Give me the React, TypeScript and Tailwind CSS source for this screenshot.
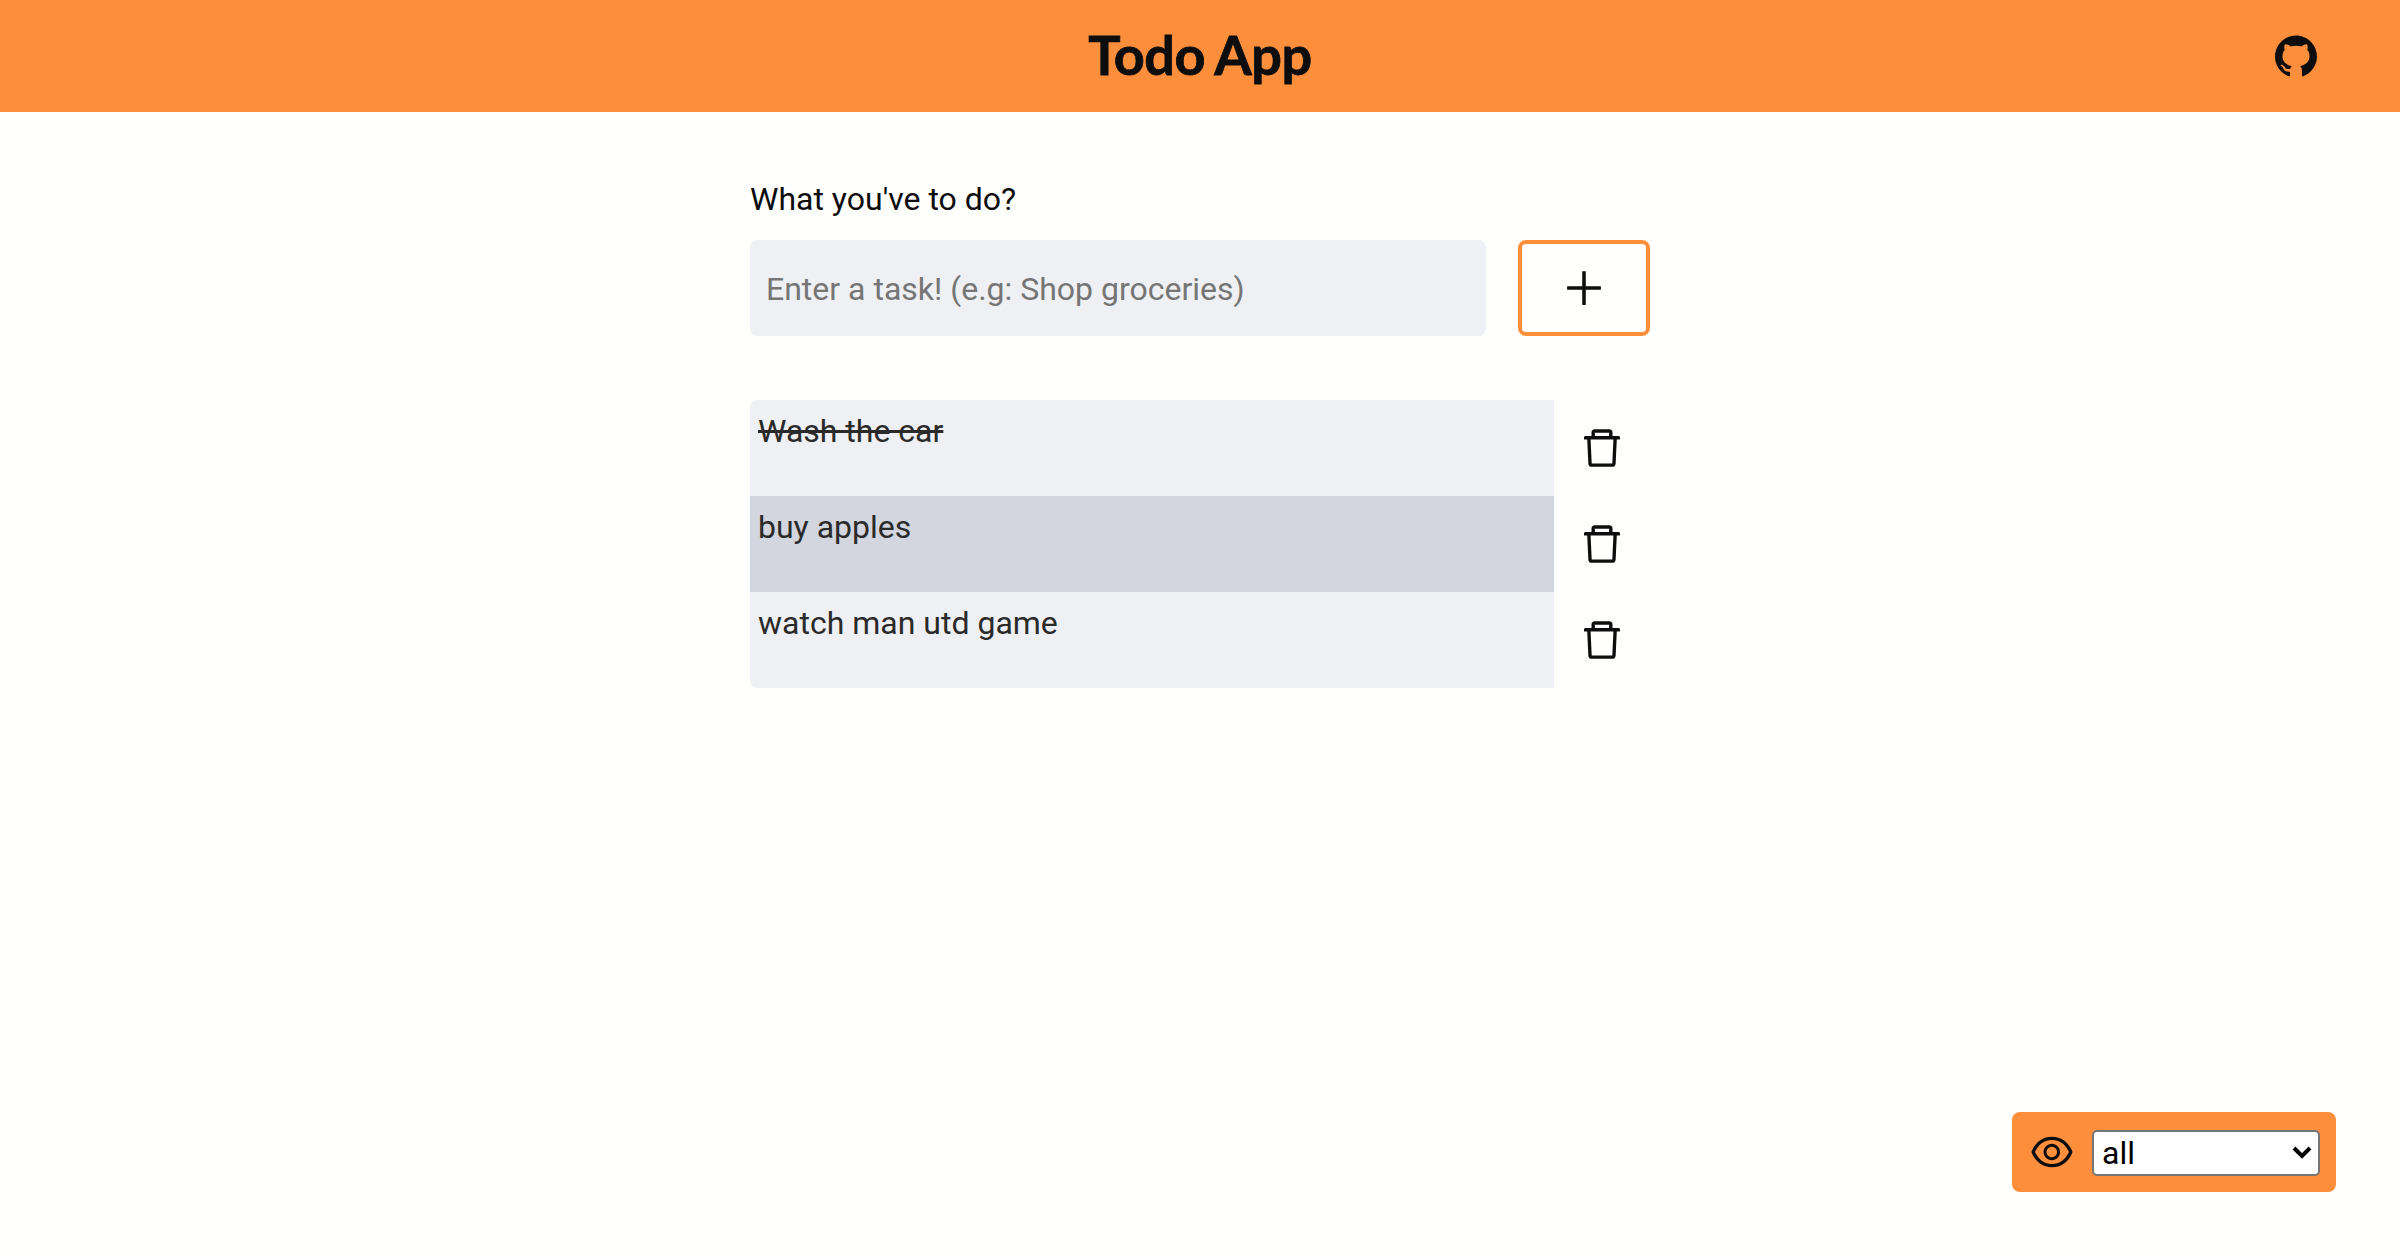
import React, { useState } from "react";
import { AiFillGithub, AiOutlineDelete, AiOutlineEye, AiOutlinePlus } from "react-icons/ai";

const tasks = [
  { text: "Wash the car", done: true },
  { text: "buy apples", done: false },
  { text: "watch man utd game", done: false },
];

export default function App() {
  const [filter, setFilter] = useState("all");
  return (
    <div className="relative h-[1256px] w-full bg-[#fffffe] font-['Roboto',sans-serif] text-[32px] leading-[38px] text-[#0d0d0d]">
      <header className="grid h-28 grid-cols-[1fr_auto_1fr] items-center bg-[#fd8f3c] px-20">
        <h1 className="col-start-2 pb-[3px] font-['Lato',sans-serif] text-[54px] leading-[64px] font-bold tracking-[-0.4px] [word-spacing:-2px] [-webkit-text-stroke:0.8px_#0d0d0d]">
          Todo App
        </h1>
        <a className="justify-self-end" aria-label="GitHub">
          <AiFillGithub size={48} />
        </a>
      </header>

      <main className="mx-auto w-[900px] pt-[68px]">
        <label className="block">What you've to do?</label>
        <form className="mt-[22px] flex gap-8" onSubmit={(e) => e.preventDefault()}>
          <input
            className="h-24 w-[736px] rounded-lg bg-[#eff0f3] px-4 pt-0.5 outline-none placeholder:text-[#757575]"
            placeholder="Enter a task! (e.g: Shop groceries)"
          />
          <button className="flex h-24 w-[132px] items-center justify-center rounded-lg border-4 border-[#fd8f3c]" aria-label="Add">
            <AiOutlinePlus size={48} />
          </button>
        </form>

        <ul className="mt-16">
          {tasks.map((t) => (
            <li key={t.text} className="group flex h-24">
              <span
                className={`w-[804px] bg-[#eff0f3] px-2 pt-3 text-[#2a2a2a] group-first:rounded-tl-lg group-last:rounded-bl-lg group-even:bg-[#d3d6df] ${t.done ? "line-through" : ""}`}
              >
                {t.text}
              </span>
              <button className="flex w-24 items-center justify-center" aria-label="Delete">
                <AiOutlineDelete size={48} />
              </button>
            </li>
          ))}
        </ul>
      </main>

      <aside className="absolute right-16 bottom-16 flex h-20 w-[324px] items-center justify-between rounded-lg bg-[#fd8f3c] px-4">
        <AiOutlineEye size={48} />
        <div className="relative mt-0.5">
          <select
            value={filter}
            onChange={(e) => setFilter(e.target.value)}
            className="block h-[46px] w-[228px] appearance-none rounded-[5px] border-2 border-[#767676] bg-white px-2 text-black"
          >
            <option>all</option>
            <option>completed</option>
            <option>active</option>
          </select>
          <svg className="pointer-events-none absolute top-4 right-2 h-[14px] w-5" viewBox="0 0 20 14" fill="none" stroke="black" strokeWidth="4">
            <path d="M2 2 10 10 18 2" />
          </svg>
        </div>
      </aside>
    </div>
  );
}
